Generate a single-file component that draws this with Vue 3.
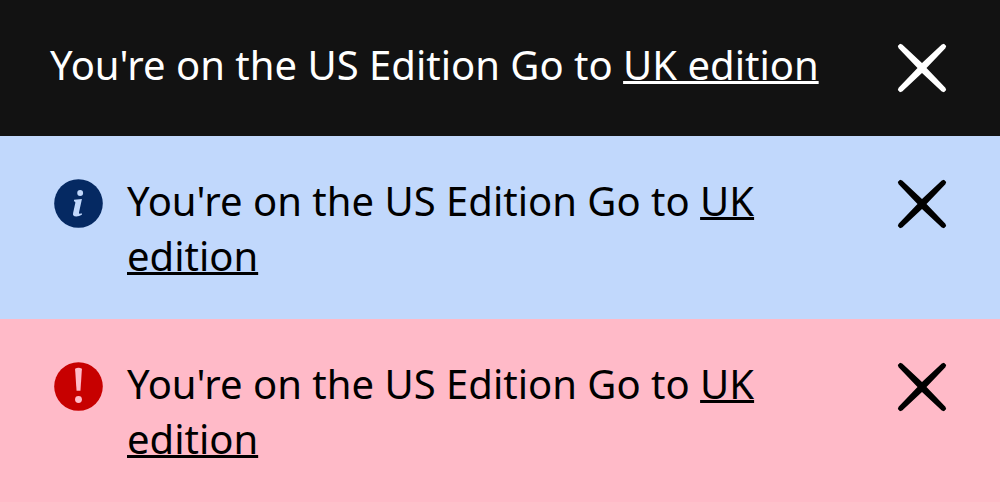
<script setup>
const notices = [
  { kind: 'default', label: 'Edition notice' },
  { kind: 'info', label: 'Information' },
  { kind: 'error', label: 'Error' }
]
</script>

<template>
  <main class="notices">
    <section v-for="notice in notices" :key="notice.kind" class="notice" :class="notice.kind" :aria-label="notice.label">
      <svg v-if="notice.kind === 'info'" class="icon" viewBox="0 0 50 50" aria-hidden="true">
        <circle cx="25" cy="25" r="24.8" fill="#052962" />
        <circle cx="26.700" cy="14.300" r="3" fill="#c1d8fc" />
        <path d="M20.500 21.300 28.500 20.500 25.500 34.200Q25.300 35.700 26.500 35.500L28.300 35 28.500 36.500Q25.500 38.300 22.800 38.300C19.800 38.300 19 37 19.500 34.700L21.800 24.200Q22 23 20.300 22.800Z" fill="#c1d8fc" />
      </svg>
      <svg v-if="notice.kind === 'error'" class="icon" viewBox="0 0 50 50" aria-hidden="true">
        <circle cx="25" cy="25" r="24.8" fill="#c70000" />
        <path d="M21.500 7Q25 4.800 28.500 7L27 29.300H23Z" fill="#ffbac8" />
        <circle cx="25" cy="38.300" r="3.500" fill="#ffbac8" />
      </svg>
      <p class="message">You're on the US Edition Go to <a href="#">UK edition</a></p>
      <button class="close" type="button" aria-label="Close">
        <svg viewBox="0 0 50 50" aria-hidden="true">
          <path d="M.8 3 3 .8 5.200 1.600 25 20 44.800 1.600 47 .8 49.200 3 48.400 5.200 29.500 25 48.400 44.800 49.200 47 47 49.200 44.800 48.400 25 30 5.200 48.400 3 49.200 .8 47 1.600 44.800 20.500 25 1.600 5.200Z" fill="currentColor" />
        </svg>
      </button>
    </section>
  </main>
</template>

<style scoped>
.notice { display: flex; align-items: flex-start; padding: 37px 52px 36px 50px; background: #121212; color: #fff; }
.info { background: #c1d8fc; color: #000; }
.error { background: #ffbac8; color: #000; }
.icon { flex: none; width: 49px; height: 49px; margin: 6px 24px 0 4px; }
.message { flex: 1; margin: 0; font: 40px/55px "Noto Sans", "Open Sans", sans-serif; }
.message a { color: inherit; text-underline-offset: 1px; text-decoration-thickness: 3px; text-decoration-skip-ink: none; }
.close { flex: none; height: 63px; padding: 6px 1px 7px; margin: 0 0 0 16px; border: 0; background: none; color: inherit; cursor: pointer; }
.close svg { display: block; width: 50px; height: 50px; }
</style>

<style>
body { margin: 0; }
</style>
